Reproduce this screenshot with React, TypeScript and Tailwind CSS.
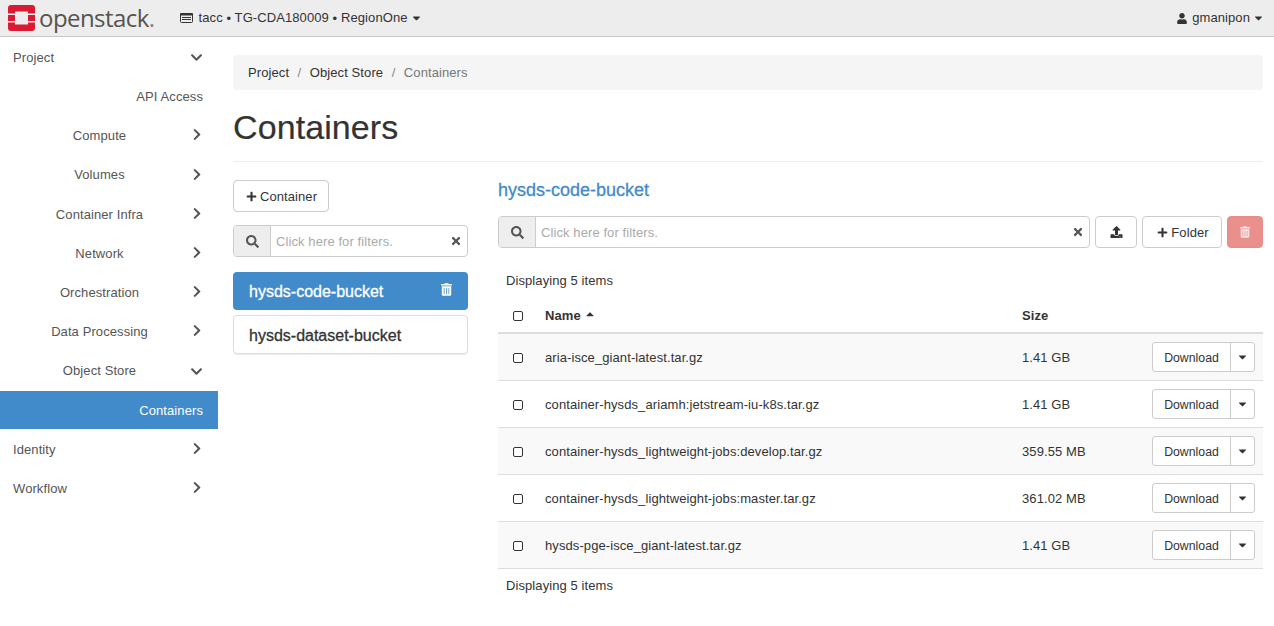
import { FaCaretDown, FaCaretUp, FaChevronDown, FaChevronRight, FaPlus, FaSearch, FaTimes, FaTrashAlt, FaUpload, FaUser } from "react-icons/fa";

type NavItem = { label: string; align: "left" | "center" | "right"; chevron?: "right" | "down"; active?: boolean };

const nav: NavItem[] = [
  { label: "Project", align: "left", chevron: "down" },
  { label: "API Access", align: "right" },
  { label: "Compute", align: "center", chevron: "right" },
  { label: "Volumes", align: "center", chevron: "right" },
  { label: "Container Infra", align: "center", chevron: "right" },
  { label: "Network", align: "center", chevron: "right" },
  { label: "Orchestration", align: "center", chevron: "right" },
  { label: "Data Processing", align: "center", chevron: "right" },
  { label: "Object Store", align: "center", chevron: "down" },
  { label: "Containers", align: "right", active: true },
  { label: "Identity", align: "left", chevron: "right" },
  { label: "Workflow", align: "left", chevron: "right" },
];

const files = [
  { name: "aria-isce_giant-latest.tar.gz", size: "1.41 GB" },
  { name: "container-hysds_ariamh:jetstream-iu-k8s.tar.gz", size: "1.41 GB" },
  { name: "container-hysds_lightweight-jobs:develop.tar.gz", size: "359.55 MB" },
  { name: "container-hysds_lightweight-jobs:master.tar.gz", size: "361.02 MB" },
  { name: "hysds-pge-isce_giant-latest.tar.gz", size: "1.41 GB" },
];

function Logo() {
  return (
    <svg width="27" height="26" viewBox="0 0 27 26" className="shrink-0">
      <path
        fill="#da1a32"
        d="M3 0h21a3 3 0 0 1 3 3v5.5h-7V7a.5.5 0 0 0-.5-.5h-12a.5.5 0 0 0-.5.5v1.5H0V3a3 3 0 0 1 3-3zM0 10h7v6H0zM20 10h7v6h-7zM0 17.5h7V19a.5.5 0 0 0 .5.5h12a.5.5 0 0 0 .5-.5v-1.5h7V23a3 3 0 0 1-3 3H3a3 3 0 0 1-3-3z"
      />
    </svg>
  );
}

function ProjectIcon() {
  return (
    <svg width="13" height="10" viewBox="0 0 13 10" className="shrink-0">
      <rect x="0.5" y="0.5" width="12" height="9" rx="1" fill="none" stroke="#333" />
      <rect x="0" y="0" width="13" height="2.5" rx="1" fill="#333" />
      <path d="M2 4.5h9M2 6.5h9" stroke="#333" />
    </svg>
  );
}

function Dot() {
  return <span className="inline-block translate-y-px">•</span>;
}

function NavRow({ item }: { item: NavItem }) {
  const alignClass = item.align === "left" ? "text-left" : item.align === "center" ? "text-center" : "text-right";
  const nudge = item.align !== "center" ? "" : item.chevron === "down" ? "pl-[4px]" : "pl-[2px]";
  return (
    <div
      className={`flex items-center pl-[13px] pr-[15px] ${
        item.active ? "mb-[1px] h-[38.2px] bg-[#428bca] pt-[1px] text-white" : "h-[39.2px] text-[#555]"
      }`}
    >
      <span className={`flex-1 ${alignClass} ${nudge}`}>{item.label}</span>
      {item.chevron === "right" && <FaChevronRight className="ml-2 mr-px h-[13px] w-[10px] -translate-y-px text-[#555]" />}
      {item.chevron === "down" && <FaChevronDown className="ml-2 h-[13px] w-[13px] text-[#555]" />}
    </div>
  );
}

function FilterBox({ className }: { className: string }) {
  return (
    <div className={`flex h-8 items-stretch rounded border border-[#ccc] ${className}`}>
      <div className="flex w-[37px] shrink-0 items-center justify-center rounded-l-[3px] border-r border-[#ccc] bg-[#eee] text-[#555]">
        <FaSearch className="h-[13px] w-[13px]" />
      </div>
      <div className="flex flex-1 items-center justify-between pl-[5px] pr-[6px] text-[#aaa]">
        <span className="pt-[2px]">Click here for filters.</span>
        <FaTimes className="h-[12px] w-[10px] text-[#555]" />
      </div>
    </div>
  );
}

function Checkbox() {
  return <span className="block h-[10px] w-[10px] rounded-[2px] border border-[#333] bg-white" />;
}

function FileRow({ name, size, striped }: { name: string; size: string; striped: boolean }) {
  return (
    <div className={`flex h-[47px] items-center border-b border-[#ddd] text-[#333] ${striped ? "bg-[#f9f9f9]" : "bg-white"}`}>
      <div className="flex w-[47px] shrink-0 pl-[15px] pt-[2px]">
        <Checkbox />
      </div>
      <div className="w-[477px] shrink-0 pt-[2px]">{name}</div>
      <div className="flex-1 pt-[2px]">{size}</div>
      <div className="mr-2 flex h-[30px] rounded-[3px] border border-[#ccc] bg-white text-[12.3px] tracking-normal">
        <div className="flex w-[78px] items-center justify-center border-r border-[#ccc] pt-[2px]">Download</div>
        <div className="flex w-[23px] items-center justify-center">
          <FaCaretDown className="h-[12px] w-[9px]" />
        </div>
      </div>
    </div>
  );
}

export default function App() {
  return (
    <div className="h-[626px] w-[1274px] overflow-hidden bg-white font-['Liberation_Sans',Arial,sans-serif] text-[13px] tracking-[0.09px] text-[#333]">
      <header className="flex h-[37px] items-center border-b border-[#c8c8c8] bg-[#ededed]">
        <div className="ml-2 flex items-center">
          <Logo />
          <span className="ml-[4px] font-['Open_Sans',sans-serif] text-[24px] leading-none font-medium tracking-[-0.55px] text-[#58534e]">
            openstack<span className="text-[#8a8580]">.</span>
          </span>
        </div>
        <div className="ml-[25px] flex items-center">
          <ProjectIcon />
          <span className="ml-[6px]">
            tacc <Dot /> TG-CDA180009 <Dot /> RegionOne
          </span>
          <FaCaretDown className="ml-[4px] h-[12px] w-[9px]" />
        </div>
        <div className="ml-auto mr-[11px] flex items-center">
          <FaUser className="h-[11px] w-[10px]" />
          <span className="ml-[5px]">gmanipon</span>
          <FaCaretDown className="ml-[4px] h-[12px] w-[9px]" />
        </div>
      </header>
      <div className="flex">
        <nav className="w-[218px] shrink-0 pt-[1px]">
          {nav.map((item) => (
            <NavRow key={item.label} item={item} />
          ))}
        </nav>
        <main className="ml-[15px] w-[1030px] pt-[18px]">
          <div className="flex h-[35px] items-center gap-[8.5px] rounded bg-[#f5f5f5] px-[15px]">
            <span>Project</span>
            <span className="text-[#888]">/</span>
            <span>Object Store</span>
            <span className="text-[#888]">/</span>
            <span className="text-[#777]">Containers</span>
          </div>
          <h1 className="flex h-[72px] items-center border-b border-[#eee] pt-[3px] text-[34px] leading-none font-medium [-webkit-text-stroke:0.2px_#333]">
            Containers
          </h1>
          <div className="mt-[18px] flex">
            <div className="w-[235px] shrink-0">
              <div className="flex h-8 w-[96px] items-center justify-center rounded border border-[#ccc] pl-[1px]">
                <FaPlus className="mr-[3px] h-[11px] w-[11px]" />
                <span className="pt-[2px]">Container</span>
              </div>
              <FilterBox className="mt-[13px]" />
              <div className="mt-[15px] flex h-[38px] items-center justify-between rounded bg-[#428bca] pl-4 pr-4 text-[16px] font-medium tracking-normal text-white">
                <span className="pt-[2px] [-webkit-text-stroke:0.3px_white]">hysds-code-bucket</span>
                <FaTrashAlt className="h-[13px] w-[11px] -translate-y-[2px]" />
              </div>
              <div className="mt-[5px] flex h-[39px] items-center rounded border border-[#ddd] pl-[15px] text-[16px] tracking-normal shadow-[0_1px_1px_rgba(0,0,0,0.08)]">
                <span className="pt-[2px] [-webkit-text-stroke:0.3px_#333]">hysds-dataset-bucket</span>
              </div>
            </div>
            <div className="ml-[30px] flex-1">
              <div className="pt-[1px] text-[18px] leading-[19px] font-medium tracking-normal text-[#428bca] [-webkit-text-stroke:0.3px_#428bca]">
                hysds-code-bucket
              </div>
              <div className="mt-[16px] flex gap-[5px]">
                <FilterBox className="flex-1" />
                <div className="flex h-8 w-[42px] items-center justify-center rounded border border-[#ccc]">
                  <FaUpload className="h-[12px] w-[13px]" />
                </div>
                <div className="flex h-8 w-[80px] items-center justify-center rounded border border-[#ccc] pl-[2px]">
                  <FaPlus className="mr-[3px] h-[11px] w-[11px]" />
                  <span className="pt-[2px]">Folder</span>
                </div>
                <div className="flex h-8 w-[36px] items-center justify-center rounded border border-[#e68d8a] bg-[#e98f8c] text-[#fbe6e5]">
                  <FaTrashAlt className="h-[12px] w-[10px]" />
                </div>
              </div>
              <div className="mt-[24px] pl-2 leading-[18px]">Displaying 5 items</div>
              <div className="mt-[8px] flex h-[36px] items-center border-b-2 border-[#ddd]">
                <div className="flex w-[47px] shrink-0 pl-[15px] pt-[2px]">
                  <Checkbox />
                </div>
                <div className="flex w-[477px] shrink-0 items-center pt-[2px] font-bold">
                  Name
                  <FaCaretUp className="ml-[4px] h-[12px] w-[10px] -translate-y-[2px]" />
                </div>
                <div className="pt-[2px] font-bold">Size</div>
              </div>
              {files.map((file, i) => (
                <FileRow key={file.name} name={file.name} size={file.size} striped={i % 2 === 0} />
              ))}
              <div className="mt-[8px] pl-2 leading-[18px]">Displaying 5 items</div>
            </div>
          </div>
        </main>
      </div>
    </div>
  );
}
